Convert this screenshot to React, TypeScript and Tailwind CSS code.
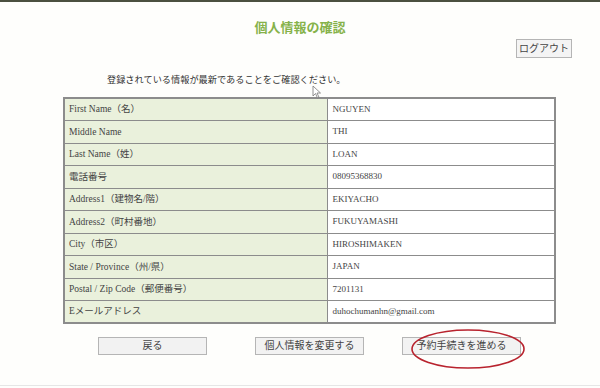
import React from "react";

const rows: [string, string][] = [
  ["First Name（名）", "NGUYEN"],
  ["Middle Name", "THI"],
  ["Last Name（姓）", "LOAN"],
  ["電話番号", "08095368830"],
  ["Address1（建物名/階）", "EKIYACHO"],
  ["Address2（町村番地）", "FUKUYAMASHI"],
  ["City（市区）", "HIROSHIMAKEN"],
  ["State / Province（州/県）", "JAPAN"],
  ["Postal / Zip Code（郵便番号）", "7201131"],
  ["Eメールアドレス", "duhochumanhn@gmail.com"],
];

const serif = "font-['Liberation_Serif','Noto_Sans_CJK_JP',serif]";
const gothic = "font-['Liberation_Sans','Noto_Sans_CJK_JP',sans-serif]";

function Btn({ label, className = "" }: { label: string; className?: string }) {
  return (
    <button
      className={`h-[18px] whitespace-nowrap border border-[#b5b5b5] bg-[#f2f2f2] px-0 text-[10px] leading-none text-[#444] ${gothic} ${className}`}
    >
      {label}
    </button>
  );
}

export default function App() {
  return (
    <div className={`relative w-[600px] h-[388px] bg-[#fefefc] border-t-2 border-[#4b5040] ${gothic}`}>
      <div className="pt-[18px] text-center text-[13px] font-bold text-[#86b24a] leading-[16px]">
        個人情報の確認
      </div>

      <div className="flex justify-end pr-[28px] mt-[3px]">
        <Btn label="ログアウト" className="w-[56px] h-[19px] bg-[#f4f4f4] border-[#a8a8a8]" />
      </div>

      <div className="pl-[107px] mt-[15px] text-[9.2px] leading-[14px] text-[#333]">
        登録されている情報が最新であることをご確認ください。
      </div>

      <table className="ml-[63px] mt-[10px] w-[493px] border-collapse border-2 border-[#8c8c8c]">
        <tbody>
          {rows.map(([label, value]) => (
            <tr key={label} className="h-[22.5px]">
              <td className={`w-[263px] border border-[#8c8c8c] bg-[#eaf1dc] pl-[4px] text-[9.5px] text-[#444] ${serif}`}>
                {label}
              </td>
              <td className={`border border-[#8c8c8c] bg-white pl-[5px] text-[9px] text-[#444] ${serif}`}>
                {value}
              </td>
            </tr>
          ))}
        </tbody>
      </table>

      <div className="flex mt-[13px]">
        <Btn label="戻る" className="ml-[98px] w-[109px]" />
        <Btn label="個人情報を変更する" className="ml-[48px] w-[109px]" />
        <Btn label="予約手続きを進める" className="ml-[38px] w-[119px]" />
      </div>

      {/* red hand-drawn circle around the confirm button */}
      <svg className="absolute left-[408px] top-[325px]" width="120" height="44" viewBox="0 0 120 44">
        <ellipse cx="60" cy="22" rx="56" ry="19" fill="none" stroke="#b8232e" strokeWidth="1.6" />
      </svg>

      {/* mouse pointer */}
      <svg className="absolute left-[312px] top-[83px]" width="10" height="14" viewBox="0 0 10 14">
        <path d="M1 1 L1 11 L3.5 8.5 L5.5 13 L7 12.3 L5 8 L8.5 8 Z" fill="#fff" stroke="#777" strokeWidth="0.8" />
      </svg>

      <div className="absolute left-0 right-0 bottom-[2px] h-px bg-[#e6e6e6]" />
    </div>
  );
}
